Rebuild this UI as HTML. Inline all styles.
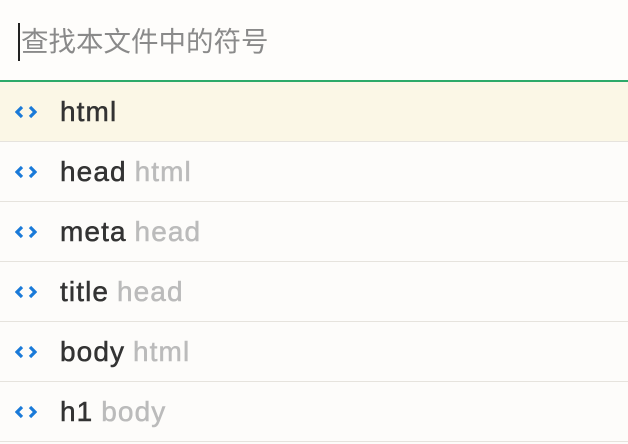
<!DOCTYPE html>
<html><head><style>
body{margin:0;width:628px;height:444px;background:#fdfcfa;font-family:"Liberation Sans","Noto Sans CJK SC",sans-serif;overflow:hidden}
.search{height:80px;border-bottom:2px solid #2daa6a;position:relative;background:#fefdfb}
.search span{position:absolute;left:18px;top:23px;font-size:27.5px;color:#8a8a8a;border-left:2px solid #222;padding-left:1px;line-height:38px}
.row{height:59px;border-bottom:1px solid #e6e3dd;position:relative}
.row.sel{background:#fbf7e6}
.ic{position:absolute;left:15px;top:22px}
.t{position:absolute;left:60px;top:13px;font-size:28px;color:#333;line-height:34px;-webkit-text-stroke:0.5px #333;letter-spacing:1.1px;word-spacing:-1px}
.t i{font-style:normal;color:#bbb;-webkit-text-stroke:0.5px #bbb}
</style></head><body>
<div class="search"><span>查找本文件中的符号</span></div>
<div class="row sel"><svg class="ic" width="22" height="16" viewBox="0 0 22 16"><path d="M7 3 2 8l5 5M15 3l5 5-5 5" fill="none" stroke="#1a7ad8" stroke-width="3.2"/></svg><div class="t">html</div></div>
<div class="row"><svg class="ic" width="22" height="16" viewBox="0 0 22 16"><path d="M7 3 2 8l5 5M15 3l5 5-5 5" fill="none" stroke="#1a7ad8" stroke-width="3.2"/></svg><div class="t">head <i>html</i></div></div>
<div class="row"><svg class="ic" width="22" height="16" viewBox="0 0 22 16"><path d="M7 3 2 8l5 5M15 3l5 5-5 5" fill="none" stroke="#1a7ad8" stroke-width="3.2"/></svg><div class="t">meta <i>head</i></div></div>
<div class="row"><svg class="ic" width="22" height="16" viewBox="0 0 22 16"><path d="M7 3 2 8l5 5M15 3l5 5-5 5" fill="none" stroke="#1a7ad8" stroke-width="3.2"/></svg><div class="t">title <i>head</i></div></div>
<div class="row"><svg class="ic" width="22" height="16" viewBox="0 0 22 16"><path d="M7 3 2 8l5 5M15 3l5 5-5 5" fill="none" stroke="#1a7ad8" stroke-width="3.2"/></svg><div class="t">body <i>html</i></div></div>
<div class="row"><svg class="ic" width="22" height="16" viewBox="0 0 22 16"><path d="M7 3 2 8l5 5M15 3l5 5-5 5" fill="none" stroke="#1a7ad8" stroke-width="3.2"/></svg><div class="t">h1 <i>body</i></div></div>
</body></html>
